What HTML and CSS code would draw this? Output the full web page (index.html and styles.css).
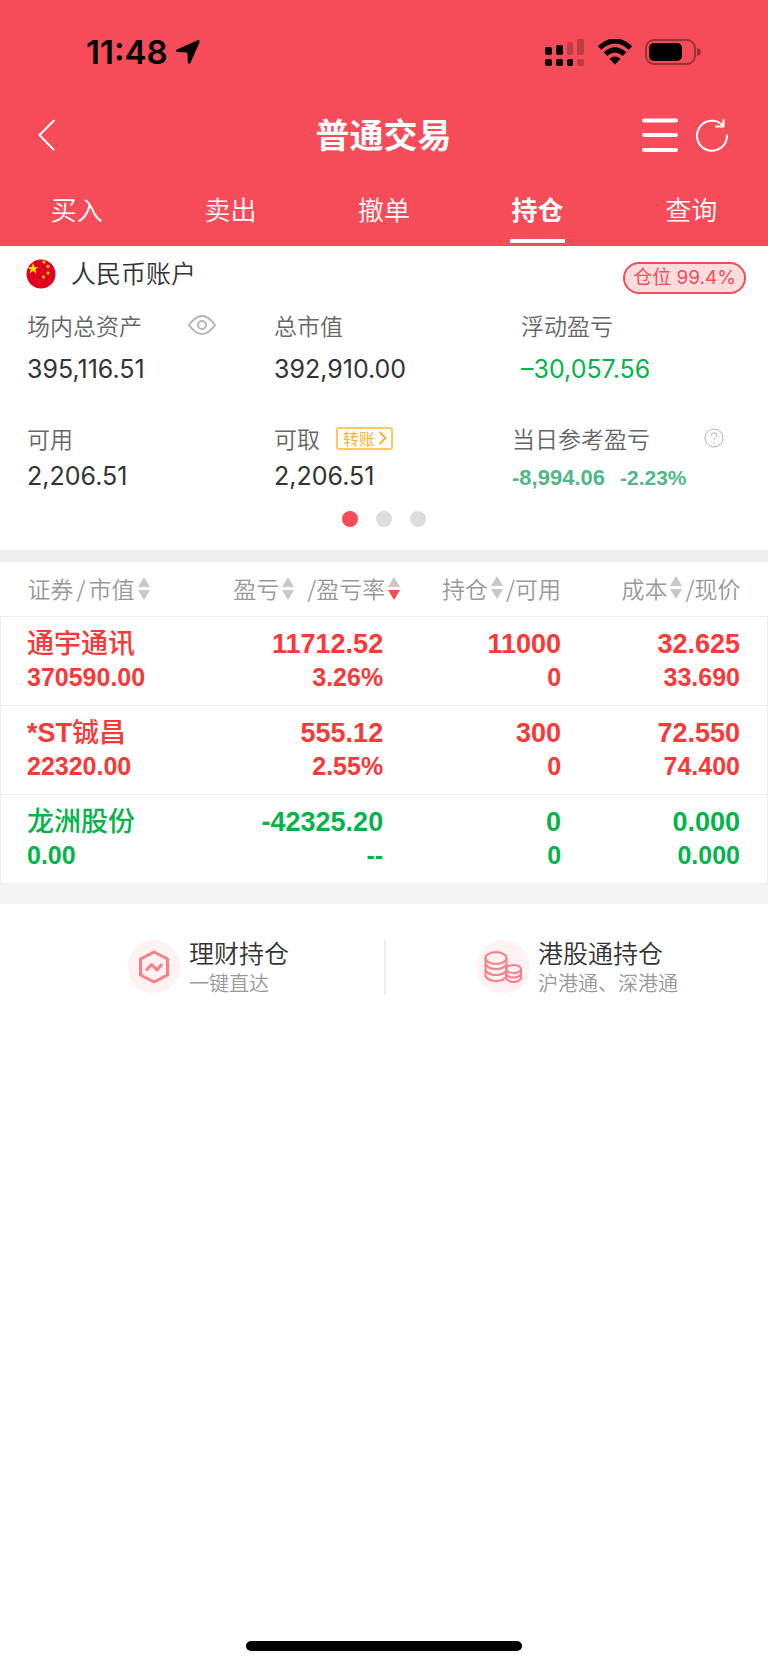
FILE: index.html
```html
<!DOCTYPE html>
<html lang="zh-CN">
<head>
    <meta charset="UTF-8">
    <meta name="viewport" content="width=device-width, initial-scale=1.0">
    <title>普通交易</title>
    <link rel="stylesheet" href="styles.css">
</head>
<body>
    <header class="header">
        <div class="statusbar">
            <div class="clock">
                <span>11:48</span>
                <svg width="26" height="26" viewBox="0 0 26 26"><path d="M22.6 1.2 L2 10.4 Q0 12 2.2 13 L11.6 13.6 Q12.4 13.7 12.4 14.6 L12.8 23.4 Q13.6 26 15.4 24 L24.6 3.2 Q25 .6 22.6 1.2Z"/></svg>
            </div>
            <div class="signals">
                <svg width="40" height="28" viewBox="0 0 40 28">
                    <rect x="0" y="9" width="7" height="8" rx="2"/>
                    <rect x="11" y="7" width="7" height="10" rx="2"/>
                    <rect class="dim" x="22" y="4" width="6" height="13" rx="2"/>
                    <rect class="dim" x="32" y="1" width="7" height="16" rx="2"/>
                    <rect x="0" y="21" width="7" height="7" rx="2"/>
                    <rect x="11" y="21" width="7" height="7" rx="2"/>
                    <rect x="22" y="21" width="6" height="7" rx="2"/>
                    <rect class="dim" x="32" y="21" width="7" height="7" rx="2"/>
                </svg>
                <svg width="34" height="26" viewBox="0 0 34 26">
                    <path class="wave" d="M1.6 9 Q17 -5 32.4 9"/>
                    <path class="wave" d="M7.4 15.2 Q17 6.6 26.6 15.2"/>
                    <path d="M11.5 19.8 Q17 15 22.5 19.8 L17 25.4Z"/>
                </svg>
                <svg width="56" height="26" viewBox="0 0 56 26">
                    <rect class="shell" x="1" y="1" width="49" height="24" rx="8"/>
                    <rect x="4" y="4" width="33" height="18" rx="5"/>
                    <path class="nub" d="M52 9 Q56 10 56 13 Q56 16 52 17Z"/>
                </svg>
            </div>
        </div>
        <div class="titlebar">
            <button class="icon-btn" aria-label="返回">
                <svg width="18" height="32" viewBox="0 0 18 32"><path class="line" d="M16 1.5 L1.5 16 L15.5 30.5"/></svg>
            </button>
            <h1 class="title">普通交易</h1>
            <div class="tools">
                <button class="icon-btn" aria-label="菜单">
                    <svg width="36" height="36" viewBox="0 0 36 36"><path class="line thick" d="M2 3.5H34M2 18H34M2 33H34"/></svg>
                </button>
                <button class="icon-btn" aria-label="刷新">
                    <svg width="34" height="34" viewBox="0 0 34 34"><path class="line" d="M32 17.5 A15 15 0 1 1 28 7.5 M28.500 2 V8.5 H21"/></svg>
                </button>
            </div>
        </div>
        <nav class="tabs">
            <a class="tab" href="#buy">买入</a>
            <a class="tab" href="#sell">卖出</a>
            <a class="tab" href="#cancel">撤单</a>
            <a class="tab active" href="#hold">持仓</a>
            <a class="tab" href="#query">查询</a>
        </nav>
    </header>

    <section class="account">
        <div class="account-head">
            <svg class="flag" width="30" height="30" viewBox="0 0 30 30">
                <circle cx="15" cy="15" r="14.5" fill="#e1001f"/>
                <path fill="#ffdf00" d="M7 4 L8.4 8 L12.4 8.1 L9.3 10.5 L10.4 14.4 L7 12.1 L3.6 14.4 L4.7 10.5 L1.6 8.1 L5.6 8Z"/>
                <circle cx="18" cy="3" r="1.7" fill="#f7b500"/>
                <circle cx="22" cy="7.5" r="1.7" fill="#f7b500"/>
                <circle cx="22" cy="14" r="1.7" fill="#f7b500"/>
                <circle cx="17.5" cy="18" r="1.7" fill="#f7b500"/>
            </svg>
            <h2 class="account-name">人民币账户</h2>
            <span class="badge">仓位 99.4%</span>
        </div>
        <div class="figures">
            <div class="figure">
                <div class="label">场内总资产
                    <button class="icon-btn eye" aria-label="隐藏金额">
                        <svg width="28" height="20" viewBox="0 0 28 20"><path class="gray" d="M1 10 Q14 -8 27 10 Q14 28 1 10Z"/><circle class="gray" cx="14" cy="10" r="4"/></svg>
                    </button>
                </div>
                <div class="value">395,116.51</div>
            </div>
            <div class="figure">
                <div class="label">总市值</div>
                <div class="value">392,910.00</div>
            </div>
            <div class="figure">
                <div class="label">浮动盈亏</div>
                <div class="value down">–30,057.56</div>
            </div>
        </div>
        <div class="figures second">
            <div class="figure">
                <div class="label">可用</div>
                <div class="value">2,206.51</div>
            </div>
            <div class="figure">
                <div class="label">可取
                    <button class="transfer">转账<svg width="9" height="14" viewBox="0 0 9 14"><path d="M1.5 1 L7.5 7 L1.5 13"/></svg></button>
                </div>
                <div class="value">2,206.51</div>
            </div>
            <div class="figure">
                <div class="label">当日参考盈亏
                    <button class="icon-btn help" aria-label="说明">
                        <svg width="20" height="20" viewBox="0 0 20 20"><circle class="gray thin" cx="10" cy="10" r="9"/><path class="gray thin" d="M7 7.8 Q7 4.8 10 4.8 Q13 4.8 13 7.4 Q13 8.8 11.4 9.8 Q10 10.8 10 12.4 M10 14 V15.6"/></svg>
                    </button>
                </div>
                <div class="today"><span>-8,994.06</span><span class="rate">-2.23%</span></div>
            </div>
        </div>
        <div class="dots">
            <span class="dot on"></span>
            <span class="dot"></span>
            <span class="dot"></span>
        </div>
    </section>

    <table class="holdings">
        <thead>
            <tr>
                <th><button class="sort">证券<span>/</span>市值<svg class="low" width="12" height="24" viewBox="0 0 12 24"><path d="M6 0 L12 10H0Z M0 13H12L6 23Z"/></svg></button></th>
                <th><button class="sort">盈亏<svg class="low" width="12" height="24" viewBox="0 0 12 24"><path d="M6 0 L12 10H0Z M0 13H12L6 23Z"/></svg></button><button class="sort rate-sort">/盈亏率<svg class="low" width="12" height="24" viewBox="0 0 12 24"><path d="M6 0 L12 10H0Z"/><path class="desc" d="M0 13H12L6 23Z"/></svg></button></th>
                <th><button class="sort">持仓<svg width="12" height="24" viewBox="0 0 12 24"><path d="M6 0 L12 10H0Z M0 13H12L6 23Z"/></svg>/可用</button></th>
                <th><button class="sort">成本<svg width="12" height="24" viewBox="0 0 12 24"><path d="M6 0 L12 10H0Z M0 13H12L6 23Z"/></svg>/现价</button></th>
            </tr>
        </thead>
        <tbody>
            <tr class="up">
                <td><div class="main name">通宇通讯</div><div class="sub">370590.00</div></td>
                <td><div class="main">11712.52</div><div class="sub">3.26%</div></td>
                <td><div class="main">11000</div><div class="sub">0</div></td>
                <td><div class="main">32.625</div><div class="sub">33.690</div></td>
            </tr>
            <tr class="up">
                <td><div class="main name"><b>*ST</b>铖昌</div><div class="sub">22320.00</div></td>
                <td><div class="main">555.12</div><div class="sub">2.55%</div></td>
                <td><div class="main">300</div><div class="sub">0</div></td>
                <td><div class="main">72.550</div><div class="sub">74.400</div></td>
            </tr>
            <tr class="down">
                <td><div class="main name">龙洲股份</div><div class="sub">0.00</div></td>
                <td><div class="main">-42325.20</div><div class="sub">--</div></td>
                <td><div class="main">0</div><div class="sub">0</div></td>
                <td><div class="main">0.000</div><div class="sub">0.000</div></td>
            </tr>
        </tbody>
    </table>

    <nav class="links">
        <a class="link" href="#wealth">
            <svg width="54" height="54" viewBox="0 0 54 54">
                <circle class="halo" cx="27" cy="27" r="26.5"/>
                <path class="pink" d="M27 12 L40.5 19 V35 L27 42 L13.5 35 V19Z"/>
                <path class="pink" d="M19 30.5 L24.5 24.5 L30 30 L35 24"/>
            </svg>
            <span class="link-text"><span class="link-title">理财持仓</span><span class="link-sub">一键直达</span></span>
        </a>
        <a class="link" href="#hk">
            <svg width="54" height="54" viewBox="0 0 54 54">
                <circle class="halo" cx="27" cy="27" r="26.5"/>
                <g class="coins">
                    <ellipse cx="20" cy="18" rx="10.500" ry="6"/>
                    <path d="M9.500 18 V36 Q12 41 20 41 Q28 41 30.500 36 V18 M9.500 24 Q12 29 20 29 Q28 29 30.500 24 M9.500 30 Q12 35 20 35 Q28 35 30.500 30"/>
                    <ellipse cx="37.500" cy="29" rx="7.500" ry="4"/>
                    <path d="M30 29 V38 Q32 42 37.500 42 Q43 42 45 38 V29 M30 34 Q32 37.500 37.500 37.500 Q43 37.500 45 34"/>
                </g>
            </svg>
            <span class="link-text"><span class="link-title">港股通持仓</span><span class="link-sub">沪港通、深港通</span></span>
        </a>
    </nav>

    <div class="home-bar"></div>
</body>
</html>
```
FILE: styles.css
```css
* {
    box-sizing: border-box;
}
body {
    margin: 0;
    min-height: 100vh;
    display: flex;
    flex-direction: column;
    background: #fff;
    color: #333;
    font-family: "Noto Sans CJK SC", sans-serif;
    font-weight: 350;
}
h1, h2 {
    margin: 0;
}
a {
    color: inherit;
    text-decoration: none;
}
button {
    margin: 0;
    padding: 0;
    border: 0;
    background: none;
    color: inherit;
    font: inherit;
    cursor: pointer;
}
svg {
    display: block;
    flex: none;
}

/* header */
.header {
    background: #f64b58;
    color: #fff;
}
.statusbar {
    display: flex;
    justify-content: space-between;
    align-items: center;
    height: 104px;
    padding: 0 67px 0 86px;
    color: #000;
}
.clock {
    display: flex;
    align-items: center;
    gap: 7px;
    font: 600 33px/40px Inter, sans-serif;
}
.signals {
    display: flex;
    align-items: center;
    gap: 13px;
}
.dim {
    fill: #c13b45;
}
.wave {
    fill: none;
    stroke: #000;
    stroke-width: 5;
}
.shell {
    fill: none;
    stroke: #9c3038;
    stroke-width: 2;
}
.nub {
    fill: #9c3038;
}
.titlebar {
    display: grid;
    grid-template-columns: 1fr auto 1fr;
    align-items: center;
    height: 62px;
    padding: 0 39px 0 38px;
}
.title {
    padding-bottom: 3px;
    font-size: 34px;
    line-height: 48px;
    font-weight: 700;
}
.tools {
    display: flex;
    align-items: center;
    justify-content: flex-end;
    gap: 17px;
}
.line {
    fill: none;
    stroke: #fff;
    stroke-width: 2;
    stroke-linecap: round;
}
.thick {
    stroke-width: 4;
}
.tabs {
    display: flex;
    height: 80px;
}
.tab {
    flex: 1;
    display: flex;
    flex-direction: column;
    align-items: center;
    padding-top: 23px;
    font-size: 26px;
    line-height: 40px;
}
.tab.active {
    font-weight: 700;
}
.tab.active::after {
    content: "";
    width: 55px;
    height: 4px;
    margin-top: 10px;
    background: #fff;
}

/* account */
.account {
    height: 316px;
    border-bottom: 12px solid #efefef;
}
.account-head {
    display: flex;
    align-items: center;
    height: 56px;
    padding: 0 22px 0 26px;
}
.account-name {
    margin-left: 15px;
    padding-bottom: 4px;
    font-size: 25px;
    line-height: 36px;
    font-weight: 350;
}
.badge {
    margin: 8px 0 0 auto;
    padding: 0 8px;
    border: 2px solid #f64b58;
    border-radius: 16px;
    background: #fddcde;
    color: #f64b58;
    font: 400 19px/28px Inter, "Noto Sans CJK SC", sans-serif;
}
.figures {
    display: grid;
    grid-template-columns: 247fr 247fr 220fr;
    padding: 5px 27px 0;
}
.second {
    grid-template-columns: 247fr 238fr 229fr;
    padding-top: 25px;
}
.label {
    display: flex;
    align-items: center;
    height: 36px;
    color: #666;
    font-size: 23px;
}
.value {
    font: 400 25px/52px Inter, sans-serif;
}
.second .value {
    line-height: 40px;
}
.up {
    color: #f93838;
}
.down {
    color: #04b44b;
}
.gray {
    fill: none;
    stroke: #b5b5b5;
    stroke-width: 2;
}
.thin {
    stroke-width: 1;
}
.eye {
    margin-left: 46px;
}
.help {
    margin-left: 54px;
}
.transfer {
    display: flex;
    align-items: center;
    gap: 3px;
    height: 23px;
    margin-left: 16px;
    padding: 0 4px 0 5px;
    border: 2px solid #fac95f;
    border-radius: 3px;
    color: #f6b32d;
    font-size: 16px;
    font-weight: 400;
}
.transfer path {
    fill: none;
    stroke: #f6b32d;
    stroke-width: 2;
}
.today {
    color: #52b788;
    font: bold 22px/44px "Liberation Sans", sans-serif;
}
.rate {
    margin-left: 15px;
    font-size: 21px;
}
.dots {
    display: flex;
    justify-content: center;
    gap: 18px;
    padding-top: 11px;
}
.dot {
    width: 16px;
    height: 16px;
    border-radius: 50%;
    background: #ddd;
}
.dot.on {
    background: #f64b58;
}

/* holdings */
.holdings {
    width: 100%;
    table-layout: fixed;
    border-collapse: collapse;
}
.holdings th {
    height: 54px;
    padding: 0 20px 2px 0;
    color: #999;
    font-size: 23px;
    font-weight: 350;
    text-align: right;
    white-space: nowrap;
}
.holdings th:first-child {
    width: 30%;
    padding-left: 27px;
    text-align: left;
}
.holdings th:nth-child(2) {
    width: 22.5%;
    padding-right: 3px;
}
.holdings th:nth-child(3) {
    width: 23.2%;
}
.holdings th:last-child, .holdings td:last-child {
    padding-right: 27px;
}
.sort {
    display: inline-flex;
    align-items: center;
    gap: 3px;
}
.sort path {
    fill: #c8c8c8;
}
.sort .desc {
    fill: #f64b58;
}
.low {
    margin-top: 3px;
}
.rate-sort {
    margin-left: 13px;
}
.holdings tbody tr {
    border: 1px solid #efefef;
}
.holdings td {
    height: 89px;
    padding: 0 20px 2px 0;
    font-family: "Liberation Sans", "Noto Sans CJK SC", sans-serif;
    font-weight: bold;
    text-align: right;
}
.holdings td:first-child {
    padding-left: 26px;
    text-align: left;
}
.main {
    font-size: 27px;
    line-height: 34px;
}
.name {
    font-weight: 500;
}
.sub {
    font-size: 25px;
    line-height: 32px;
}

/* links */
.links {
    display: flex;
    padding-top: 36px;
    border-top: 20px solid #f4f4f4;
}
.link {
    width: 50%;
    display: flex;
    align-items: center;
    justify-content: center;
    gap: 8px;
    height: 55px;
}
.link:first-child {
    padding-left: 32px;
}
.link + .link {
    border-left: 2px solid #eee;
}
.link-text {
    display: flex;
    flex-direction: column;
}
.link-title {
    font-size: 25px;
    line-height: 32px;
}
.link-sub {
    color: #999;
    font-size: 20px;
    line-height: 30px;
}
.halo {
    fill: #fff2f2;
}
.pink, .coins {
    fill: none;
    stroke: #fb7d87;
    stroke-width: 3;
    stroke-linejoin: round;
}
.coins {
    stroke-width: 2;
}
.home-bar {
    width: 276px;
    height: 10px;
    margin: auto auto 14px;
    border-radius: 5px;
    background: #000;
}
```
